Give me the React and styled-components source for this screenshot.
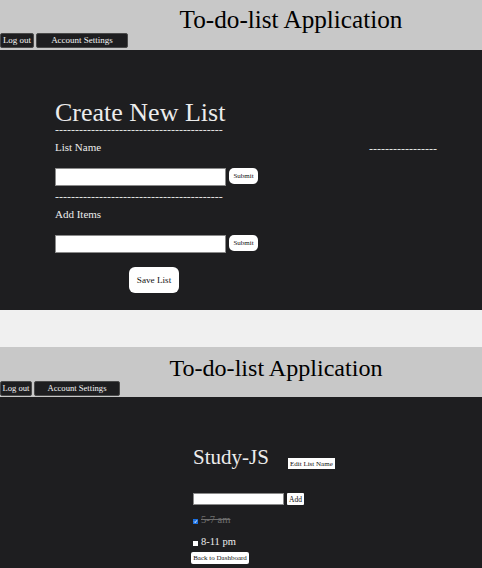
import React from "react";
import styled, { createGlobalStyle } from "styled-components";

const serif = `"Liberation Serif", "Times New Roman", serif`;

const GlobalStyle = createGlobalStyle`
  html, body { margin: 0; padding: 0; background: #f0f0f0; }
  body { font-family: ${serif}; }
  * { box-sizing: border-box; }
`;

const Page = styled.div`
  display: flex;
  flex-direction: column;
  gap: 37px;
  width: 482px;
  font-family: ${serif};
`;

const Screen = styled.section`
  display: flex;
  flex-direction: column;
`;

const Header = styled.header`
  height: 50px;
  background: #c8c8c8;
  display: flex;
  flex-direction: column;
  padding-top: ${(p) => p.$pt}px;
`;

const AppTitle = styled.h1`
  margin: 0;
  font-family: ${serif};
  font-weight: normal;
  color: #000;
  font-size: ${(p) => p.$size}px;
  line-height: ${(p) => Math.round(p.$size)}px;
  text-align: center;
  padding-left: ${(p) => p.$shift}px;
  white-space: nowrap;
`;

const NavBar = styled.nav`
  display: flex;
  gap: 2px;
  margin-top: ${(p) => p.$mt}px;
`;

const NavButton = styled.button`
  width: ${(p) => p.$w}px;
  height: 15px;
  padding: 0;
  background: #1e1e20;
  color: #f4f4f4;
  border: 1px solid #4a4a4a;
  border-radius: 2px;
  font-family: ${serif};
  font-size: ${(p) => p.$fs}px;
  line-height: 13px;
  white-space: nowrap;
`;

const DarkBody = styled.main`
  background: #1e1e20;
  height: ${(p) => p.$h}px;
  display: flex;
  padding-top: 50px;
`;

const FormColumn = styled.div`
  margin-left: 55px;
  width: 204px;
  display: flex;
  flex-direction: column;
  align-items: flex-start;
`;

const Heading = styled.h2`
  margin: 0;
  font-family: ${serif};
  font-weight: normal;
  font-size: 26px;
  line-height: 25px;
  height: 25px;
  color: #ececec;
  white-space: nowrap;
`;

const Dashes = styled.div`
  font-family: ${serif};
  font-size: 12px;
  line-height: 8px;
  height: 8px;
  color: #e0e0e0;
  margin-top: ${(p) => p.$mt || 0}px;
  margin-left: ${(p) => p.$ml || 0}px;
  white-space: nowrap;
`;

const Label = styled.div`
  font-family: ${serif};
  font-size: 11px;
  line-height: 11px;
  color: #ececec;
  margin-top: 8px;
`;

const InputRow = styled.div`
  display: flex;
  align-items: flex-start;
  gap: 3px;
  margin-top: ${(p) => p.$mt}px;
`;

const TextInput = styled.input`
  width: ${(p) => p.$w}px;
  height: ${(p) => p.$h}px;
  margin: 0;
  padding: 0;
  background: #fff;
  border: 1px solid #8a8a8a;
`;

const WhiteButton = styled.button`
  width: ${(p) => p.$w}px;
  height: ${(p) => p.$h}px;
  margin: 0;
  margin-top: ${(p) => p.$mt || 0}px;
  margin-left: ${(p) => p.$ml || 0}px;
  padding: 0;
  background: #fff;
  color: #111;
  border: none;
  border-radius: ${(p) => p.$r || 0}px;
  font-family: ${serif};
  font-size: ${(p) => p.$fs}px;
  white-space: nowrap;
`;

const ListColumn = styled.div`
  margin-left: 193px;
  display: flex;
  flex-direction: column;
  align-items: flex-start;
`;

const TitleRow = styled.div`
  display: flex;
  align-items: flex-start;
  gap: 19px;
`;

const ListTitle = styled.h2`
  margin: 0;
  font-family: ${serif};
  font-weight: normal;
  font-size: 21px;
  line-height: 21px;
  color: #ececec;
  white-space: nowrap;
`;

const ItemRow = styled.label`
  display: flex;
  align-items: flex-end;
  gap: 3px;
  height: 12px;
  margin-top: ${(p) => p.$mt}px;
`;

const Box = styled.span`
  width: 5px;
  height: 5px;
  margin-bottom: 2px;
  display: flex;
  background: ${(p) => (p.$checked ? "#1a6fe0" : "#ffffff")};
`;

const ItemText = styled.span`
  font-family: ${serif};
  font-size: 10.5px;
  line-height: 12px;
  color: ${(p) => (p.$done ? "#6e6e6e" : "#ececec")};
  text-decoration: ${(p) => (p.$done ? "line-through" : "none")};
  white-space: nowrap;
`;

const dash = (n) => "-".repeat(n);

function AppHeader({ pt, size, shift, mt, logW, accW, fs }) {
  return (
    <Header $pt={pt}>
      <AppTitle $size={size} $shift={shift}>To-do-list Application</AppTitle>
      <NavBar $mt={mt}>
        <NavButton $w={logW} $fs={fs}>Log out</NavButton>
        <NavButton $w={accW} $fs={fs}>Account Settings</NavButton>
      </NavBar>
    </Header>
  );
}

function Item({ text, done, mt }) {
  return (
    <ItemRow $mt={mt}>
      <Box $checked={done}>
        {done && (
          <svg width="5" height="5" viewBox="0 0 5 5">
            <path d="M1.2 2.6 L2.2 3.6 L3.9 1.3" stroke="#fff" strokeWidth="0.9" fill="none" />
          </svg>
        )}
      </Box>
      <ItemText $done={done}>{text}</ItemText>
    </ItemRow>
  );
}

export default function App() {
  return (
    <>
      <GlobalStyle />
      <Page>
        <Screen>
          <AppHeader pt={7} size={25.2} shift={100} mt={1} logW={34} accW={92} fs={9} />
          <DarkBody $h={260}>
            <FormColumn>
              <Heading>Create New List</Heading>
              <Dashes $mt={1}>{dash(42)}</Dashes>
              <Label>List Name</Label>
              <InputRow $mt={15}>
                <TextInput $w={171} $h={18} />
                <WhiteButton $w={29} $h={16} $r={5} $fs={7}>Submit</WhiteButton>
              </InputRow>
              <Dashes $mt={7}>{dash(42)}</Dashes>
              <Label>Add Items</Label>
              <InputRow $mt={15}>
                <TextInput $w={171} $h={18} />
                <WhiteButton $w={29} $h={16} $r={5} $fs={7}>Submit</WhiteButton>
              </InputRow>
              <WhiteButton $w={50} $h={26} $r={6} $fs={9.2} $mt={14} $ml={74}>Save List</WhiteButton>
            </FormColumn>
            <Dashes $mt={45} $ml={110}>{dash(17)}</Dashes>
          </DarkBody>
        </Screen>
        <Screen>
          <AppHeader pt={9} size={24.1} shift={70} mt={1} logW={32} accW={86} fs={8.6} />
          <DarkBody $h={171}>
            <ListColumn>
              <TitleRow>
                <ListTitle>Study-JS</ListTitle>
                <WhiteButton $w={47} $h={11} $fs={7} $mt={11}>Edit List Name</WhiteButton>
              </TitleRow>
              <InputRow $mt={24}>
                <TextInput $w={91} $h={12} />
                <WhiteButton $w={17} $h={12} $r={1} $fs={7.5}>Add</WhiteButton>
              </InputRow>
              <Item text="5-7 am" done mt={9} />
              <Item text="8-11 pm" mt={10} />
              <WhiteButton $w={58} $h={11.5} $r={2} $fs={7} $mt={4} $ml={-2}>Back to Dashboard</WhiteButton>
            </ListColumn>
          </DarkBody>
        </Screen>
      </Page>
    </>
  );
}
